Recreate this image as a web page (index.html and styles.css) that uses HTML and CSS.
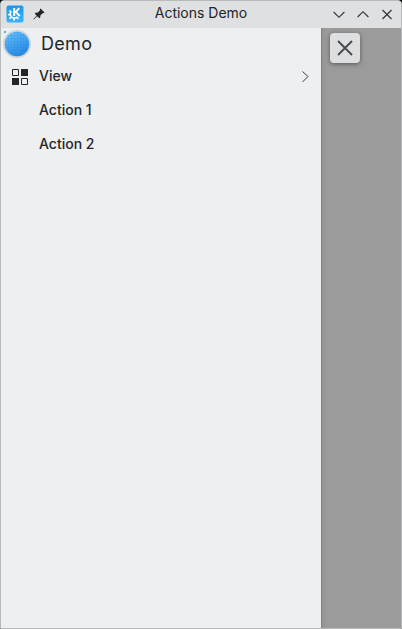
FILE: index.html
```html
<!DOCTYPE html>
<html lang="en">
<head>
<meta charset="utf-8">
<title>Actions Demo</title>
<link rel="stylesheet" href="styles.css">
</head>
<body>
<div class="window">
  <header class="titlebar">
    <div class="side">
      <svg class="logo" width="18" height="18" viewBox="0 0 18 18">
        <defs><linearGradient id="lg" x2="0" y2="1"><stop offset="0" stop-color="#1b97e8"/><stop offset="1" stop-color="#3eb4f5"/></linearGradient></defs>
        <rect x=".5" y=".5" width="17" height="17" rx="2" fill="url(#lg)"/>
        <path d="M5.400 6.300A4 4 0 1 0 11.300 11.700" fill="none" stroke="#fff" stroke-width="1.600"/>
        <path d="M4.800 6.800 3.400 5.500M4 9.600H2.200M4.900 12.400l-1.400 1.400M8 13v2.400M11 12.400l1.500 1.500" fill="none" stroke="#fff" stroke-width="1.600"/>
        <path d="M7.200 3h2v8h-2z" fill="#fff"/>
        <path d="M13.200 3.200 9.800 7l4 4.200" fill="none" stroke="#fff" stroke-width="1.900"/>
      </svg>
      <svg class="pin" width="12" height="12" viewBox="0 0 12 12">
        <path d="M7.500.5 11.500 4.500 10.600 5.200 9.900 4.900 7.500 7.300 7.200 9.600 6.300 10.300 4.200 8.200 1 11.300.4 11.400.6 10.800 3.700 7.700 1.800 5.700 2.500 4.800 4.900 4.500 7.200 2.100 6.800 1.300Z" fill="#232629"/>
      </svg>
    </div>
    <h1 class="title">Actions Demo</h1>
    <div class="side controls">
      <svg width="12" height="12" viewBox="0 0 12 12"><path d="M.6 3 6 8.300 11.400 3"/></svg>
      <svg width="12" height="12" viewBox="0 0 12 12"><path d="M.6 8 6 2.700 11.400 8"/></svg>
      <svg width="12" height="12" viewBox="0 0 12 12"><path d="m1.500 1 9 9m0-9-9 9"/></svg>
    </div>
  </header>
  <main class="content">
    <nav class="drawer">
      <div class="heading">
        <svg width="30" height="30" viewBox="0 0 30 30">
          <defs>
            <linearGradient id="globe" x1=".2" y1="0" x2=".7" y2="1"><stop offset="0" stop-color="#62c0fb"/><stop offset="1" stop-color="#2486e3"/></linearGradient>
            <pattern id="mesh" width="3" height="3" patternUnits="userSpaceOnUse"><path d="M0 .5h3M.5 0v3" stroke="#1677cf" stroke-opacity=".2" stroke-width=".7"/></pattern>
          </defs>
          <circle cx="15" cy="15" r="14" fill="#ccd4da"/>
          <circle cx="15" cy="15" r="12.200" fill="url(#globe)"/>
          <circle cx="15" cy="15" r="12.200" fill="url(#mesh)"/>
          <path d="M2 2h2v2H2z" fill="#61abc9"/>
        </svg>
        <h2>Demo</h2>
      </div>
      <a class="item">
        <svg class="grid" width="16" height="16" viewBox="0 0 16 16"><path d="M.5.5h6v6h-6zM9.500 9.500h6v6h-6z" fill="none" stroke="#232629"/><path d="M9 0h7v7H9zM0 9h7v7H0z" fill="#232629"/></svg>
        <span>View</span>
        <svg class="arrow" width="8" height="14" viewBox="0 0 8 14"><path d="m.5 2.500 5.500 5-5.500 5.500" fill="none" stroke="#3b3e41"/></svg>
      </a>
      <a class="item"><i></i><span>Action 1</span></a>
      <a class="item"><i></i><span>Action 2</span></a>
    </nav>
    <div class="overlay">
      <button class="close" aria-label="Close"><svg width="16" height="16" viewBox="0 0 16 16"><path d="m1 1 14 14M15 1 1 15" fill="none" stroke="#484b50" stroke-width="1.900"/></svg></button>
    </div>
  </main>
</div>
</body>
</html>
```
FILE: styles.css
```css
* { box-sizing: border-box; }
body { margin: 0; background: #000; color: #232629; font-family: Inter, "Noto Sans", sans-serif; }
svg { display: block; flex: none; }
h1, h2 { margin: 0; font-weight: 400; }
.window { height: 629px; display: flex; flex-direction: column; border: 1px solid #b8b9ba; border-radius: 4px 4px 0 0; overflow: hidden; background: #eeeff1; }
.titlebar { height: 27px; flex: none; display: flex; align-items: center; background: #dee0e2; }
.side { height: 25px; align-self: flex-start; width: 80px; display: flex; align-items: center; padding-left: 5px; }
.pin { margin-left: 9px; }
.title { flex: 1; text-align: center; font-size: 14px; line-height: 20px; padding-bottom: 3px; }
.controls { height: 27px; gap: 12px; justify-content: flex-end; padding: 0 8px 0 0; }
.controls path { fill: none; stroke: #303336; stroke-width: 1.150; }
.content { flex: 1; display: flex; }
.drawer { width: 320px; background: #eeeff1; }
.heading { height: 31px; display: flex; align-items: center; padding-left: 1px; }
.heading h2 { margin-left: 9px; font-size: 18px; line-height: 24px; letter-spacing: .3px; }
.item { height: 34px; display: flex; align-items: center; padding: 0 11px; font-size: 14px; font-weight: 500; }
.item i { width: 16px; }
.item .grid { margin-top: 2px; }
.item span { margin-left: 11px; line-height: 20px; }
.item .arrow { margin-left: auto; }
.overlay { flex: 1; padding: 5px 0 0 8px; border-left: 1px solid #828384; background: linear-gradient(90deg, #949494, #9b9b9b 5px); }
.close { width: 30px; height: 30px; display: grid; place-items: center; padding: 0; border: 0; border-radius: 4px; background: #dedfe1; box-shadow: 0 1px 4px rgba(0,0,0,.45); }
```
